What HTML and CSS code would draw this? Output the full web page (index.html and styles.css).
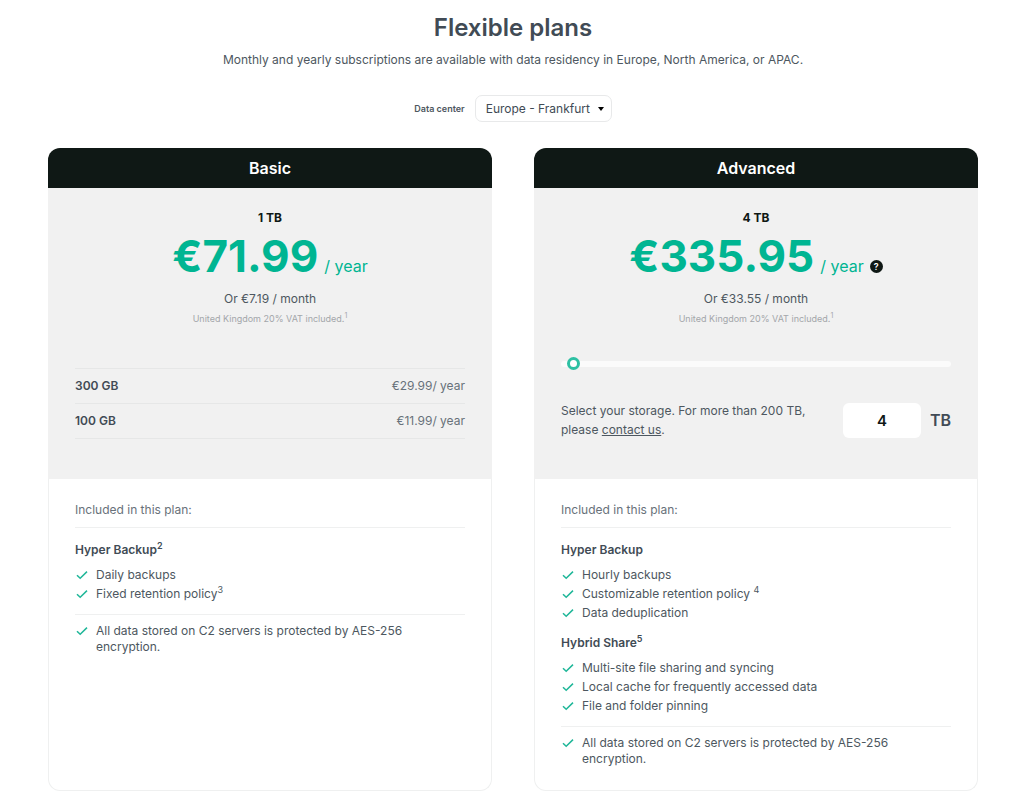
FILE: index.html
```html
<!DOCTYPE html>
<html lang="en">
<head>
<meta charset="utf-8">
<meta name="viewport" content="width=device-width, initial-scale=1">
<title>Flexible plans</title>
<link rel="stylesheet" href="styles.css">
</head>
<body>
<svg class="sprite" aria-hidden="true">
  <symbol id="check" viewBox="0 0 12 10"><path d="M1 5.2 4.2 8.3 11 1.6" fill="none" stroke="currentColor" stroke-width="1.5"/></symbol>
</svg>
<main class="page">
  <header class="intro">
    <h1 class="title">Flexible plans</h1>
    <p class="subtitle">Monthly and yearly subscriptions are available with data residency in Europe, North America, or APAC.</p>
    <div class="region">
      <label class="region-label" for="region">Data center</label>
      <div class="select-wrap">
        <select class="select" id="region"><option>Europe - Frankfurt</option></select>
        <svg class="caret" viewBox="0 0 6 4" aria-hidden="true"><path d="M0 0h6L3 4z" fill="currentColor"/></svg>
      </div>
    </div>
  </header>

  <div class="plans">
    <section class="card">
      <h2 class="card-title">Basic</h2>
      <div class="pricing">
        <p class="size">1 TB</p>
        <p class="price"><strong class="amount">€71.99</strong><span class="period">/ year</span></p>
        <p class="monthly">Or €7.19 / month</p>
        <p class="vat">United Kingdom 20% VAT included.<sup>1</sup></p>
        <table class="tiers">
          <tr><th scope="row">300 GB</th><td>€29.99/ year</td></tr>
          <tr><th scope="row">100 GB</th><td>€11.99/ year</td></tr>
        </table>
      </div>
      <div class="features">
        <p class="included">Included in this plan:</p>
        <h3 class="group">Hyper Backup<sup>2</sup></h3>
        <ul class="list">
          <li><svg class="check"><use href="#check"/></svg><span>Daily backups</span></li>
          <li><svg class="check"><use href="#check"/></svg><span>Fixed retention policy<sup>3</sup></span></li>
        </ul>
        <p class="security"><svg class="check"><use href="#check"/></svg><span>All data stored on C2 servers is protected by AES-256 encryption.</span></p>
      </div>
    </section>

    <section class="card">
      <h2 class="card-title">Advanced</h2>
      <div class="pricing">
        <p class="size">4 TB</p>
        <p class="price"><strong class="amount">€335.95</strong><span class="period">/ year</span><button class="help" type="button" aria-label="Pricing help">?</button></p>
        <p class="monthly">Or €33.55 / month</p>
        <p class="vat">United Kingdom 20% VAT included.<sup>1</sup></p>
        <input class="slider" type="range" min="0" max="200" value="3" aria-label="Storage in TB">
        <div class="storage">
          <p class="storage-text"><label for="storage">Select your storage.</label> For more than 200 TB, please <a class="link" href="#contact">contact us</a>.</p>
          <input class="storage-input" id="storage" type="text" inputmode="numeric" value="4">
          <span class="unit">TB</span>
        </div>
      </div>
      <div class="features">
        <p class="included">Included in this plan:</p>
        <h3 class="group">Hyper Backup</h3>
        <ul class="list">
          <li><svg class="check"><use href="#check"/></svg><span>Hourly backups</span></li>
          <li><svg class="check"><use href="#check"/></svg><span>Customizable retention policy <sup>4</sup></span></li>
          <li><svg class="check"><use href="#check"/></svg><span>Data deduplication</span></li>
        </ul>
        <h3 class="group">Hybrid Share<sup>5</sup></h3>
        <ul class="list">
          <li><svg class="check"><use href="#check"/></svg><span>Multi-site file sharing and syncing</span></li>
          <li><svg class="check"><use href="#check"/></svg><span>Local cache for frequently accessed data</span></li>
          <li><svg class="check"><use href="#check"/></svg><span>File and folder pinning</span></li>
        </ul>
        <p class="security"><svg class="check"><use href="#check"/></svg><span>All data stored on C2 servers is protected by AES-256 encryption.</span></p>
      </div>
    </section>
  </div>
</main>
</body>
</html>
```
FILE: styles.css
```css
* { box-sizing: border-box; }
body {
  margin: 0;
  background: #fff;
  color: #4d5760;
  font: 12px/18px Inter, "Liberation Sans", sans-serif;
}
h1, h2, h3, p, ul { margin: 0; padding: 0; }
ul { list-style: none; }
sup { font-size: 9px; line-height: 0; }
.sprite { display: none; }

.page { padding: 13px 46px 11px 48px; }
.intro { display: flex; flex-direction: column; align-items: center; }
.title { font-size: 24px; line-height: 30px; font-weight: 600; color: #414b55; }
.subtitle { margin-top: 8px; text-align: center; }
.region { display: flex; align-items: center; gap: 10px; margin: 26px 0; }
.region-label { font-size: 9px; font-weight: 600; }
.select-wrap { position: relative; display: flex; align-items: center; }
.select {
  appearance: none;
  height: 27px;
  padding: 0 20px 0 10px;
  border: 1px solid #e8e9ea;
  border-radius: 7px;
  background: #fff;
  color: #414b55;
  font: inherit;
}
.caret { position: absolute; right: 8px; width: 6px; height: 4px; color: #000; pointer-events: none; }

.plans { display: grid; grid-template-columns: 1fr 1fr; gap: 42px; }
.card { display: flex; flex-direction: column; }
.card-title {
  border-radius: 12px 12px 0 0;
  background: #0f1815;
  color: #fff;
  font-size: 16px;
  line-height: 40px;
  font-weight: 600;
  text-align: center;
}
.pricing {
  display: flex;
  flex-direction: column;
  align-items: center;
  padding: 20px 27px 40px;
  background: #f1f1f1;
}
.size { line-height: 20px; font-weight: 700; color: #0f1815; }
.price { display: flex; align-items: baseline; gap: 6px; color: #00b592; }
.amount { font-size: 44px; line-height: 56px; font-weight: 700; }
.period { font-size: 16px; line-height: 20px; }
.help {
  align-self: center;
  width: 13px;
  height: 13px;
  margin-top: 20px;
  padding: 0;
  border: 0;
  border-radius: 50%;
  background: #0f1815;
  color: #fff;
  font: 600 9px/13px Inter, sans-serif;
}
.monthly { margin-top: 6px; }
.vat { margin-top: 2px; font-size: 9px; color: #a3a6aa; }
.vat sup { font-size: 7px; }

.tiers { width: 100%; margin-top: 40px; border-collapse: collapse; }
.tiers tr { height: 35px; border: solid #e6e7e7; border-width: 1px 0; }
.tiers th, .tiers td { padding: 0; }
.tiers th { text-align: left; font-weight: 600; color: #414b55; }
.tiers td { text-align: right; color: #68717a; }

.slider { appearance: none; width: 100%; height: 14px; margin: 29px 0 0; background: transparent; }
.slider::-webkit-slider-runnable-track { height: 6px; border-radius: 3px; background: #fbfbfb; }
.slider::-webkit-slider-thumb {
  appearance: none;
  width: 13px;
  height: 13px;
  margin-top: -4px;
  border: 3px solid #2dc0a3;
  border-radius: 50%;
  background: #fff;
}
.storage { display: flex; align-items: center; width: 100%; margin-top: 30px; }
.storage-text { flex: 1; padding-right: 32px; line-height: 19px; }
.link { color: inherit; }
.storage-input {
  width: 78px;
  height: 35px;
  border: 0;
  border-radius: 6px;
  background: #fff;
  color: #0f1815;
  font: 600 15px/18px Inter, sans-serif;
  text-align: center;
}
.unit { margin-left: 9px; font-size: 16px; font-weight: 600; color: #414b55; }

.features {
  flex: 1;
  padding: 22px 26px 23px;
  border: solid #eff0f0;
  border-width: 0 1px 1px;
  border-radius: 0 0 12px 12px;
}
.included { padding-bottom: 8px; border-bottom: 1px solid #eff0f0; color: #68717a; }
.group { margin: 13px 0 6px; font-size: 12px; line-height: 18px; font-weight: 600; color: #414b55; }
.list + .group { margin-top: 12px; }
.list li { display: flex; gap: 8px; line-height: 19px; }
.check { flex: none; width: 12px; height: 10px; margin: 5px 0 0 1px; color: #20b799; }
.security {
  display: flex;
  gap: 8px;
  margin-top: 11px;
  padding-top: 8px;
  border-top: 1px solid #eff0f0;
  line-height: 16px;
}
.security .check { margin-top: 3px; }
.security span { max-width: 330px; }
```
